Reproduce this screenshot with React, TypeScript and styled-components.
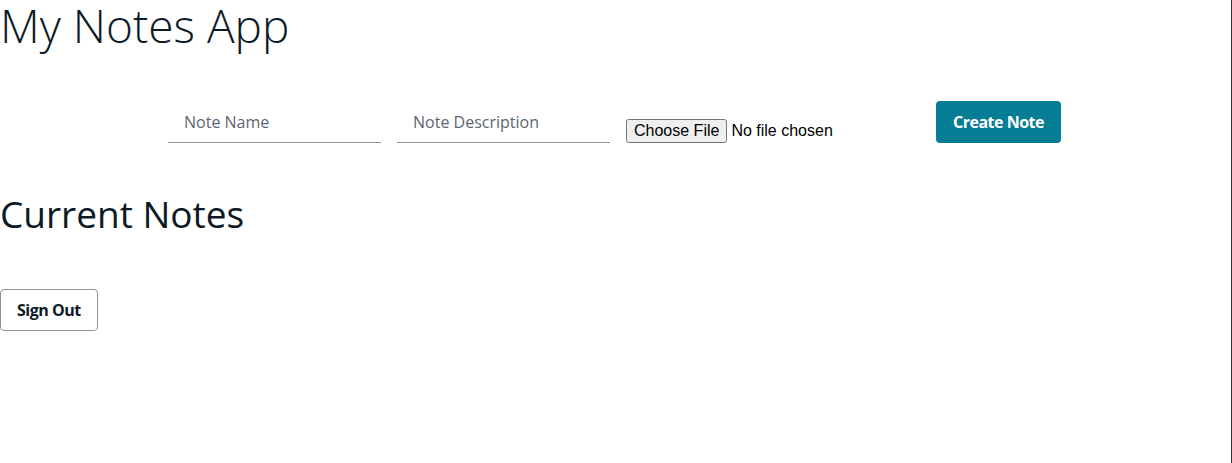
import styled, { createGlobalStyle } from 'styled-components'

const GlobalStyle = createGlobalStyle`
    html, body {
        margin:0;
        padding:0;
        background-color:#fff;
    }
    body {
        font-family: "Open Sans", "Noto Sans", sans-serif;
        color:#0d1a26;
    }
    * {
        box-sizing:border-box;
    }
`

const Page = styled.div`
    min-height:100vh;
    border-right:1px solid #333;
`

const Title = styled.h1`
    margin:0;
    font-size:46px;
    font-weight:300;
    line-height:50px;
`

const NoteForm = styled.form`
    margin:51px 0 0;
    padding-right:2px;
    display:flex;
    justify-content:center;
    gap:16px;
`

const TextInput = styled.input`
    width:213px;
    padding:8px 16px;
    border:none;
    border-bottom:1px solid #89949f;
    font-family:inherit;
    font-size:16px;
    line-height:24px;
    color:#0d1a26;
    background:transparent;
    outline:none;

    &::placeholder{
        color:#5c6670;
    }
`

const FileInput = styled.input`
    align-self:flex-end;
    width:294px;
    font-family:"Liberation Sans", Arial, sans-serif;
    font-size:16px;
    color:#000;
`

const Button = styled.button<{ $primary?: boolean }>`
    padding:8px 16px;
    border-radius:4px;
    font-family:inherit;
    font-size:16px;
    font-weight:700;
    line-height:24px;
    letter-spacing:-0.5px;
    cursor:pointer;
    border:1px solid ${p => p.$primary ? 'transparent' : '#89949f'};
    background-color:${p => p.$primary ? '#047d95' : 'transparent'};
    color:${p => p.$primary ? '#fff' : '#0d1a26'};
`

const SectionTitle = styled.h2`
    margin:48px 0 0;
    font-size:37px;
    font-weight:400;
    line-height:45px;
`

const NotesList = styled.div`
    margin:53px 0 0;
`

export default function App() {

    return <>
        <GlobalStyle />
        <Page>
            <Title>My Notes App</Title>

            <NoteForm onSubmit={e => e.preventDefault()}>
                <TextInput name="name" placeholder="Note Name" aria-label="Note Name" />
                <TextInput name="description" placeholder="Note Description" aria-label="Note Description" />
                <FileInput name="image" type="file" />
                <Button type="submit" $primary>Create Note</Button>
            </NoteForm>

            <SectionTitle>Current Notes</SectionTitle>

            <NotesList>
                <Button type="button">Sign Out</Button>
            </NotesList>
        </Page>
    </>
}
